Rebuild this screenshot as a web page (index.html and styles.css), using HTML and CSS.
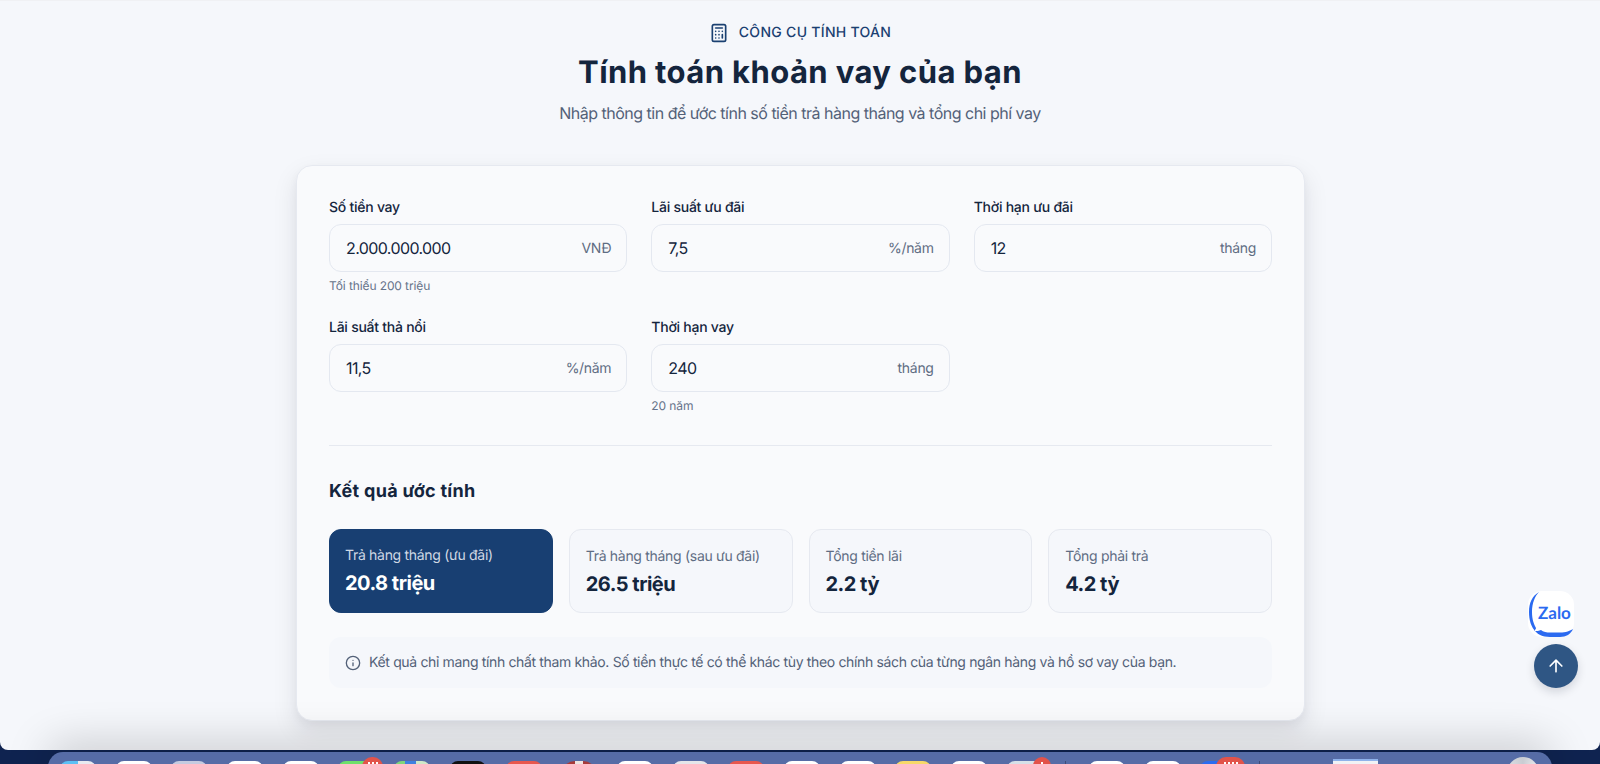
FILE: index.html
```html
<!DOCTYPE html>
<html lang="vi">
<head>
    <meta charset="UTF-8">
    <meta name="viewport" content="width=device-width, initial-scale=1.0">
    <title>Tính toán khoản vay</title>
    <link rel="stylesheet" href="styles.css">
</head>
<body>
    <div class="window">
        <main class="page">
            <!-- Header -->
            <header class="intro">
                <p class="eyebrow">
                    <svg class="eyebrow-icon" viewBox="0 0 24 24" fill="none" stroke="currentColor" stroke-width="2" stroke-linecap="round" stroke-linejoin="round">
                        <rect x="4" y="2" width="16" height="20" rx="2"/>
                        <line x1="8" y1="6" x2="16" y2="6"/>
                        <line x1="16" y1="14" x2="16" y2="18"/>
                        <path d="M16 10h.01M12 10h.01M8 10h.01M12 14h.01M8 14h.01M12 18h.01M8 18h.01"/>
                    </svg>
                    CÔNG CỤ TÍNH TOÁN
                </p>
                <h1>Tính toán khoản vay của bạn</h1>
                <p class="lead">Nhập thông tin để ước tính số tiền trả hàng tháng và tổng chi phí vay</p>
            </header>

            <!-- Calculator -->
            <section class="card">
                <div class="fields">
                    <div class="field">
                        <label>Số tiền vay</label>
                        <div class="input"><span class="value">2.000.000.000</span><span class="unit">VNĐ</span></div>
                        <p class="hint">Tối thiểu 200 triệu</p>
                    </div>
                    <div class="field">
                        <label>Lãi suất ưu đãi</label>
                        <div class="input"><span class="value">7,5</span><span class="unit">%/năm</span></div>
                    </div>
                    <div class="field">
                        <label>Thời hạn ưu đãi</label>
                        <div class="input"><span class="value">12</span><span class="unit">tháng</span></div>
                    </div>
                    <div class="field">
                        <label>Lãi suất thả nổi</label>
                        <div class="input"><span class="value">11,5</span><span class="unit">%/năm</span></div>
                    </div>
                    <div class="field">
                        <label>Thời hạn vay</label>
                        <div class="input"><span class="value">240</span><span class="unit">tháng</span></div>
                        <p class="hint">20 năm</p>
                    </div>
                </div>

                <div class="results">
                    <h2>Kết quả ước tính</h2>
                    <div class="stats">
                        <div class="stat stat-main">
                            <p class="stat-label">Trả hàng tháng (ưu đãi)</p>
                            <p class="stat-value">20.8 triệu</p>
                        </div>
                        <div class="stat">
                            <p class="stat-label">Trả hàng tháng (sau ưu đãi)</p>
                            <p class="stat-value">26.5 triệu</p>
                        </div>
                        <div class="stat">
                            <p class="stat-label">Tổng tiền lãi</p>
                            <p class="stat-value">2.2 tỷ</p>
                        </div>
                        <div class="stat">
                            <p class="stat-label">Tổng phải trả</p>
                            <p class="stat-value">4.2 tỷ</p>
                        </div>
                    </div>
                    <p class="note">
                        <svg class="note-icon" viewBox="0 0 24 24" fill="none" stroke="currentColor" stroke-width="2" stroke-linecap="round" stroke-linejoin="round">
                            <circle cx="12" cy="12" r="10"/>
                            <path d="M12 16v-4M12 8h.01"/>
                        </svg>
                        Kết quả chỉ mang tính chất tham khảo. Số tiền thực tế có thể khác tùy theo chính sách của từng ngân hàng và hồ sơ vay của bạn.
                    </p>
                </div>
            </section>
        </main>

        <!-- Floating buttons -->
        <a class="zalo">
            <svg class="zalo-bubble" viewBox="0 0 46 46">
                <path fill="#2b6af0" d="M11 1C4 5 1 12 1 21c0 8 2 15 7 20 2 2 6 5 14 5h10c6 0 11-3 13-8-5 3-9 3.500-15 3.500h-8c-3 0-7-.5-9-2.500-2 1-4 1-7 1 1-1 2-2 2-3-2-4-4-8-4-16 0-9 3-16 7-20z"/>
            </svg>
            <span class="zalo-text">Zalo</span>
        </a>
        <a class="to-top">
            <svg viewBox="0 0 24 24" fill="none" stroke="currentColor" stroke-width="2" stroke-linecap="round" stroke-linejoin="round">
                <path d="M12 19V5M5 12l7-7 7 7"/>
            </svg>
        </a>
    </div>

    <!-- Desktop dock peeking out under the browser window -->
    <div class="desktop">
        <div class="dock">
            <span class="app app-finder"></span>
            <span class="app"></span>
            <span class="app app-lavender"></span>
            <span class="app"></span>
            <span class="app"></span>
            <span class="app app-green"><span class="badge badge-left"></span></span>
            <span class="app app-maps"></span>
            <span class="app app-black"></span>
            <span class="app app-red"></span>
            <span class="app app-maroon"></span>
            <span class="app"></span>
            <span class="app app-grey"></span>
            <span class="app app-red"></span>
            <span class="app"></span>
            <span class="app"></span>
            <span class="app app-yellow"></span>
            <span class="app"></span>
            <span class="app app-pale"><span class="badge badge-small"></span></span>
            <span class="dock-divider"></span>
            <span class="app"></span>
            <span class="app"></span>
            <span class="app app-blue"><span class="badge badge-wide"></span></span>
            <span class="dock-divider"></span>
            <span class="dock-thumb"></span>
            <span class="dock-disc"></span>
        </div>
    </div>
</body>
</html>
```

FILE: styles.css
```css
/* General styling */
* {
    margin: 0;
    padding: 0;
    box-sizing: border-box;
}
body {
    position: relative;
    display: flex;
    flex-direction: column;
    height: 764px;
    overflow: hidden;
    font-family: Inter, 'Liberation Sans', sans-serif;
    text-rendering: geometricPrecision;
    background-color: #0f2350;
}
.window {
    position: relative;
    height: 750px;
    overflow: hidden;
    border-top: 1px solid #f0f1f4;
    border-radius: 0 0 8px 8px;
    background-color: #f5f7fb;
}
.page {
    display: flex;
    flex-direction: column;
    align-items: center;
    padding-top: 21px;
}
/* Header */
.intro {
    display: flex;
    flex-direction: column;
    align-items: center;
}
.eyebrow {
    display: flex;
    align-items: center;
    gap: 10px;
    color: #1a4071;
    font-size: 14px;
    line-height: 22px;
    font-weight: 500;
    letter-spacing: .3px;
}
.eyebrow-icon {
    width: 20px;
    height: 20px;
}
h1 {
    margin-top: 11px;
    color: #14253d;
    font-size: 31px;
    line-height: 36px;
    font-weight: 700;
    letter-spacing: .4px;
}
.lead {
    margin-top: 10px;
    color: #536178;
    font-size: 16px;
    line-height: 24px;
    letter-spacing: -.5px;
}
/* Card */
.card {
    width: 1009px;
    margin: 40px 0 0 1px;
    padding: 32px;
    border: 1px solid #e6e9f0;
    border-radius: 16px;
    background-color: #f9fafc;
    box-shadow: 0 10px 24px rgba(15,23,42,.1), 0 4px 8px rgba(15,23,42,.04);
}
.fields {
    display: grid;
    grid-template-columns: repeat(3, 1fr);
    column-gap: 24px;
    row-gap: 24px;
    padding-bottom: 31px;
    border-bottom: 1px solid #e6e9f0;
}
.field {
    display: flex;
    flex-direction: column;
}
label {
    margin-bottom: 6px;
    color: #14253d;
    font-size: 14px;
    line-height: 20px;
    font-weight: 500;
    letter-spacing: -.25px;
}
.input {
    display: flex;
    align-items: center;
    justify-content: space-between;
    height: 48px;
    padding: 0 15px 0 16px;
    border: 1px solid #e4e8f0;
    border-radius: 12px;
    background-color: #f9fafc;
}
.value {
    color: #14253d;
    font-size: 16px;
    letter-spacing: -.6px;
}
.unit {
    color: #5f6d83;
    font-size: 14px;
    letter-spacing: -.3px;
}
.hint {
    margin-top: 6px;
    color: #66738a;
    font-size: 12px;
    line-height: 16px;
    letter-spacing: -.1px;
}
/* Results */
.results {
    padding-top: 32px;
}
h2 {
    color: #14253d;
    font-size: 18px;
    line-height: 28px;
    font-weight: 700;
    letter-spacing: .3px;
}
.stats {
    display: grid;
    grid-template-columns: repeat(4, 1fr);
    gap: 16px;
    margin-top: 23px;
}
.stat {
    height: 84px;
    padding: 17px 16px 0;
    border: 1px solid #e6e9f0;
    border-radius: 12px;
    background-color: #f5f7fb;
}
.stat-label {
    color: #5f6d83;
    font-size: 14px;
    line-height: 20px;
    letter-spacing: -.3px;
}
.stat-value {
    margin-top: 3px;
    color: #14253d;
    font-size: 20px;
    line-height: 28px;
    font-weight: 700;
    letter-spacing: -.5px;
}
.stat-main {
    padding: 16px 15px 0;
    border-color: #183f72;
    background-color: #183f72;
}
.stat-main .stat-label {
    color: #cfd8e4;
}
.stat-main .stat-value {
    color: #fff;
}
.note {
    display: flex;
    align-items: center;
    gap: 8px;
    height: 51px;
    margin-top: 24px;
    padding: 0 16px;
    border-radius: 12px;
    color: #536178;
    font-size: 14px;
    letter-spacing: -.35px;
    background-color: #f5f7fb;
}
.note-icon {
    flex: none;
    width: 16px;
    height: 16px;
}
/* Floating buttons */
.zalo {
    position: absolute;
    top: 590px;
    left: 1528px;
    width: 46px;
    height: 46px;
    border-radius: 14px;
    background-color: #fff;
}
.zalo-bubble {
    position: absolute;
    inset: 0;
    width: 46px;
    height: 46px;
}
.zalo-text {
    position: absolute;
    top: 11px;
    left: 10px;
    color: #2b6af0;
    font-size: 17px;
    line-height: 22px;
    font-weight: 700;
    font-family: Lato, sans-serif;
}
.to-top {
    position: absolute;
    top: 643px;
    left: 1534px;
    display: flex;
    align-items: center;
    justify-content: center;
    width: 44px;
    height: 44px;
    border-radius: 50%;
    color: #fff;
    background-color: #2f5684;
    box-shadow: 0 4px 10px rgba(15,23,42,.15);
}
.to-top svg {
    width: 20px;
    height: 20px;
}
/* Desktop dock */
.desktop {
    flex: 1;
    position: relative;
    z-index: 1;
}
.dock {
    position: absolute;
    top: 2px;
    left: 48px;
    right: 48px;
    display: flex;
    align-items: flex-start;
    gap: 19.7px;
    height: 30px;
    padding: 9px 0 0 12px;
    border-radius: 15px 15px 0 0;
    background-color: #566ca6;
    box-shadow: 0 -6px 44px rgba(0,0,0,.22);
}
.app {
    position: relative;
    flex: none;
    width: 36px;
    height: 30px;
    border-radius: 8px;
    background-color: #fff;
}
.app-finder { background: linear-gradient(90deg, #5cc0f5 50%, #e8eaf0 50%); }
.app-lavender { background-color: #c5cbe0; }
.app-green { background-color: #6ee06a; }
.app-maps { background: linear-gradient(90deg, #7ed67a 30%, #3f80e0 30%, #3f80e0 60%, #cfe8c8 60%); }
.app-black { background-color: #111; }
.app-red { background-color: #e8574e; }
.app-maroon { background: linear-gradient(90deg, #a83a3a 40%, #efe4e0 40%, #efe4e0 60%, #a83a3a 60%); border-radius: 14px; }
.app-grey { background-color: #e4e6ea; }
.app-yellow { background-color: #f7d968; }
.app-pale { background-color: #d5e0e8; }
.app-blue { background-color: #2b6cf0; }
/* Only the top of each badge shows, the digits are little white ticks */
.badge {
    position: absolute;
    top: -4px;
    height: 20px;
    border-radius: 10px;
    background: repeating-linear-gradient(90deg, #fff 0 2px, transparent 2px 4px) center 5px / 10px 2px no-repeat, #e2534a;
}
.badge-left { left: 24px; width: 21px; }
.badge-small { left: 26px; width: 18px; background-size: 2px 2px, auto; }
.badge-wide { left: 16px; width: 29px; background-size: 14px 2px, auto; }
.dock-divider {
    flex: none;
    width: 1px;
    height: 20px;
    margin: 0 3px;
    background-color: #3e4c78;
}
.dock-thumb {
    flex: none;
    width: 45px;
    height: 20px;
    margin: -2px 0 0 50px;
    border-top: 2px solid #8fb2ea;
    background-color: #f1f2f5;
}
.dock-disc {
    flex: none;
    width: 32px;
    height: 32px;
    margin: -4px 0 0 109px;
    border-radius: 50%;
    background: conic-gradient(#c9ccd2, #f2f3f5, #8c9096, #dfe2e6, #c9ccd2);
}
```
